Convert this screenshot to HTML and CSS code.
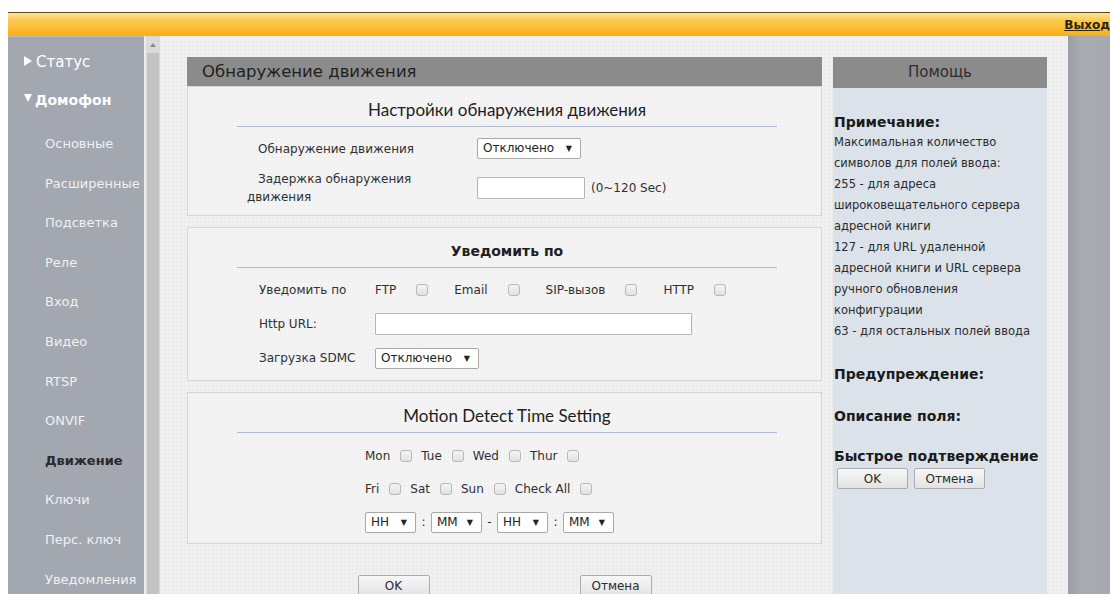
FILE: index.html
```html
<!DOCTYPE html>
<html lang="ru">
<head>
<meta charset="utf-8">
<title>Обнаружение движения</title>
<link rel="stylesheet" href="styles.css">
</head>
<body>
<div class="page">
  <header class="topbar">
    <a class="logout" href="#">Выход</a>
  </header>

  <div class="layout">
    <nav class="sidebar">
      <div class="nav-top"><span class="tri tri-right"></span>Статус</div>
      <div class="nav-top open"><span class="tri tri-down"></span>Домофон</div>
      <ul class="nav-sub">
        <li>Основные</li>
        <li>Расширенные</li>
        <li>Подсветка</li>
        <li>Реле</li>
        <li>Вход</li>
        <li>Видео</li>
        <li>RTSP</li>
        <li>ONVIF</li>
        <li class="active">Движение</li>
        <li>Ключи</li>
        <li>Перс. ключ</li>
        <li>Уведомления</li>
      </ul>
    </nav>

    <div class="scrollbar">
      <span class="scroll-up"></span>
      <div class="scroll-thumb"></div>
    </div>

    <main class="content">
      <section class="panel">
        <h1 class="panel-title">Обнаружение движения</h1>

        <div class="box">
          <h2 class="box-title">Настройки обнаружения движения</h2>
          <div class="form-grid">
            <label class="label-indent">Обнаружение движения</label>
            <div><span class="select w104">Отключено</span></div>
            <label class="label-indent">Задержка обнаружения движения</label>
            <div class="inline"><input class="text w108" type="text"><span class="hint">(0~120 Sec)</span></div>
          </div>
        </div>

        <div class="box">
          <h2 class="box-title bold">Уведомить по</h2>
          <div class="form-rows">
            <div class="row">
              <span class="row-label">Уведомить по</span>
              <span class="opt">FTP</span><input class="check" type="checkbox">
              <span class="opt">Email</span><input class="check" type="checkbox">
              <span class="opt">SIP-вызов</span><input class="check" type="checkbox">
              <span class="opt">HTTP</span><input class="check" type="checkbox">
            </div>
            <div class="row">
              <span class="row-label">Http URL:</span>
              <input class="text w317" type="text">
            </div>
            <div class="row">
              <span class="row-label">Загрузка SDMC</span>
              <span class="select w104">Отключено</span>
            </div>
          </div>
        </div>

        <div class="box">
          <h2 class="box-title latin">Motion Detect Time Setting</h2>
          <div class="schedule">
            <div class="days">
              <span>Mon</span><input class="check" type="checkbox">
              <span>Tue</span><input class="check" type="checkbox">
              <span>Wed</span><input class="check" type="checkbox">
              <span>Thur</span><input class="check" type="checkbox">
            </div>
            <div class="days">
              <span>Fri</span><input class="check" type="checkbox">
              <span>Sat</span><input class="check" type="checkbox">
              <span>Sun</span><input class="check" type="checkbox">
              <span>Check All</span><input class="check" type="checkbox">
            </div>
            <div class="times">
              <span class="select w51">HH</span><span class="sep">:</span>
              <span class="select w51">MM</span><span class="sep">-</span>
              <span class="select w51">HH</span><span class="sep">:</span>
              <span class="select w51">MM</span>
            </div>
          </div>
        </div>

        <div class="actions">
          <button class="btn" type="button">OK</button>
          <button class="btn" type="button">Отмена</button>
        </div>
      </section>

      <aside class="help">
        <h2 class="help-title">Помощь</h2>
        <div class="help-body">
          <h3>Примечание:</h3>
          <p>Максимальная количество<br>символов для полей ввода:<br>255 - для адреса<br>широковещательного сервера<br>адресной книги<br>127 - для URL удаленной<br>адресной книги и URL сервера<br>ручного обновления<br>конфигурации<br>63 - для остальных полей ввода</p>
          <h3 class="gap">Предупреждение:</h3>
          <h3 class="gap">Описание поля:</h3>
          <h3 class="gap last">Быстрое подтверждение</h3>
          <div class="help-actions">
            <button class="btn" type="button">OK</button>
            <button class="btn" type="button">Отмена</button>
          </div>
        </div>
      </aside>
    </main>

    <div class="gutter"></div>
  </div>
</div>
</body>
</html>
```

FILE: styles.css
```css
html, body {
  margin: 0;
  padding: 0;
  background: #ffffff;
  overflow: hidden;
}

body {
  font-family: "DejaVu Sans", "Liberation Sans", sans-serif;
  font-size: 12px;
  color: #303030;
}

.page {
  padding: 12px 0 0 8px;
  width: 1102px;
}

/* orange strip across the top */
.topbar {
  height: 23px;
  border-top: 1px solid #5a4814;
  background: linear-gradient(#fde49a 0%, #fcc84c 35%, #f9ae14 100%);
  display: flex;
  justify-content: flex-end;
  align-items: center;
}

.logout {
  color: #2a2410;
  font-size: 12px;
  font-weight: bold;
  text-decoration: underline;
  white-space: nowrap;
}

.layout {
  display: flex;
  height: 558px;
}

/* left navigation */
.sidebar {
  width: 136px;
  flex: none;
  background: #a3a7af;
  border-top: 1px solid #b9bcc3;
  padding-top: 6px;
  box-sizing: border-box;
}

.nav-top {
  display: flex;
  align-items: center;
  height: 38px;
  padding-left: 16px;
  color: #ffffff;
  font-size: 15px;
  white-space: nowrap;
}

.nav-top.open {
  font-size: 14px;
  font-weight: bold;
  margin-bottom: 5px;
}

/* expand / collapse markers */
.tri {
  width: 0;
  height: 0;
  flex: none;
}

.tri-right {
  border-top: 5px solid transparent;
  border-bottom: 5px solid transparent;
  border-left: 8px solid #ffffff;
  margin-right: 4px;
  margin-top: -2px;
}

.tri-down {
  border-left: 4.5px solid transparent;
  border-right: 4.5px solid transparent;
  border-top: 8px solid #ffffff;
  margin-right: 3px;
  margin-top: -4px;
}

.nav-sub {
  list-style: none;
  margin: 0;
  padding: 0;
}

.nav-sub li {
  height: 39.6px;
  line-height: 39.6px;
  padding-left: 37px;
  color: #f0f1f3;
  font-size: 13px;
  white-space: nowrap;
}

.nav-sub li.active {
  color: #2a2a2a;
  font-weight: bold;
}

/* inner frame scrollbar */
.scrollbar {
  width: 16px;
  flex: none;
  background: #dadada;
  border-left: 2px solid #ececec;
  box-sizing: border-box;
  display: flex;
  flex-direction: column;
  align-items: center;
}

.scroll-up {
  margin-top: 7px;
  width: 0;
  height: 0;
  border-left: 3px solid transparent;
  border-right: 3px solid transparent;
  border-bottom: 4px solid #8a8a8a;
}

.scroll-thumb {
  margin-top: 6px;
  width: 12px;
  flex: 1;
  background: #c3c3c3;
}

/* main working area */
.content {
  width: 908px;
  flex: none;
  box-sizing: border-box;
  display: flex;
  gap: 11px;
  padding: 21px 0 0 27px;
  background-color: #f1f1f1;
  background-image:
    repeating-linear-gradient(0deg, rgba(0,0,0,0.018) 0 1px, transparent 1px 4px),
    repeating-linear-gradient(90deg, rgba(0,0,0,0.018) 0 1px, transparent 1px 4px);
}

.panel {
  width: 635px;
  flex: none;
}

.panel-title {
  margin: 0;
  height: 29px;
  line-height: 29px;
  padding-left: 15px;
  background: #8b8b8b;
  color: #1f1f1f;
  font-size: 16.5px;
  font-weight: normal;
}

.box {
  border: 1px solid #d6d6d6;
  background: rgba(255,255,255,0.25);
  margin-bottom: 11px;
}

.box-title {
  margin: 0 44px 0 49px;
  padding: 13px 0 6px;
  line-height: 20px;
  text-align: center;
  font-family: "Lato", "DejaVu Sans", sans-serif;
  font-size: 17px;
  font-weight: normal;
  color: #1e1e1e;
  border-bottom: 1px solid #b3bcd6;
}

.box-title.bold {
  font-family: "DejaVu Sans", sans-serif;
  font-size: 14px;
  font-weight: bold;
}

/* first box: two-column grid */
.form-grid {
  display: grid;
  grid-template-columns: 230px 1fr;
  row-gap: 11px;
  align-items: center;
  padding: 11px 0 9px 59px;
}

.form-grid label {
  line-height: 18px;
  padding-right: 60px;
}

.label-indent {
  text-indent: 11px;
}

.inline {
  display: flex;
  align-items: center;
  gap: 6px;
}

/* second box: label + controls rows */
.form-rows {
  display: flex;
  flex-direction: column;
  gap: 12px;
  padding: 11px 0 11px 71px;
}

.row {
  display: flex;
  align-items: center;
  min-height: 22px;
}

.row-label {
  width: 116px;
  flex: none;
}

.opt {
  margin-right: 20px;
}

.opt + .check {
  margin-right: 26px;
}

/* third box: weekday schedule */
.schedule {
  padding: 13px 0 11px 177px;
  display: flex;
  flex-direction: column;
  gap: 13px;
}

.days {
  display: flex;
  align-items: center;
  height: 20px;
}

.days span {
  margin-right: 10px;
}

.days .check {
  margin-right: 9px;
}

.times {
  display: flex;
  align-items: center;
  height: 20px;
}

.sep {
  width: 15px;
  text-align: center;
}

/* form controls */
.select {
  position: relative;
  display: inline-block;
  box-sizing: border-box;
  height: 21px;
  line-height: 19px;
  padding-left: 5px;
  background: #ffffff;
  border: 1px solid #a9a9a9;
  border-radius: 2px;
  color: #222;
  white-space: nowrap;
}

.select::after {
  content: "\25BC";
  position: absolute;
  right: 8px;
  top: 0;
  font-size: 8px;
  color: #222;
}

.w104 { width: 104px; }
.w51 { width: 51px; }

.text {
  box-sizing: border-box;
  height: 22px;
  background: #ffffff;
  border: 1px solid #b4b4b4;
  border-radius: 1px;
  margin: 0;
  padding: 0;
}

.w108 { width: 108px; }
.w317 { width: 317px; }

.check {
  appearance: none;
  -webkit-appearance: none;
  box-sizing: border-box;
  width: 12px;
  height: 12px;
  margin: 0;
  flex: none;
  border: 1px solid #b8b8b8;
  border-radius: 3px;
  background: linear-gradient(#f4f4f4, #e2e2e2);
}

.actions {
  display: flex;
  justify-content: center;
  gap: 150px;
  margin-top: 31px;
}

.btn {
  width: 72px;
  height: 22px;
  padding: 0;
  font-family: "DejaVu Sans", sans-serif;
  font-size: 12px;
  color: #2b2b2b;
  background: linear-gradient(#f7f7f7, #e3e3e3);
  border: 1px solid #acacac;
  border-radius: 2px;
}

/* help column */
.help {
  width: 214px;
  flex: none;
  background: #dce2e9;
  display: flex;
  flex-direction: column;
}

.help-title {
  margin: 0;
  height: 31px;
  line-height: 31px;
  text-align: center;
  background: #8b8b8b;
  color: #2e2e2e;
  font-size: 15px;
  font-weight: normal;
}

.help-body {
  padding: 24px 0 0 1px;
}

.help-body h3 {
  margin: 0;
  font-size: 14px;
  line-height: 20px;
  font-weight: bold;
  color: #1a1a1a;
  white-space: nowrap;
}

.help-body h3.gap {
  margin-top: 22px;
}

.help-body h3.last {
  margin-top: 20px;
}

.help-body p {
  margin: 0;
  line-height: 21px;
  font-size: 11.5px;
  color: #2b2b2b;
  white-space: nowrap;
}

.help-actions {
  display: flex;
  gap: 6px;
  margin-top: 2px;
  padding-left: 3px;
}

.help-actions .btn {
  width: 71px;
  height: 21px;
}

.gutter {
  flex: 1;
  background: linear-gradient(90deg, #9b9ea4, #a8abb1 30%, #a6a9af);
}
```
